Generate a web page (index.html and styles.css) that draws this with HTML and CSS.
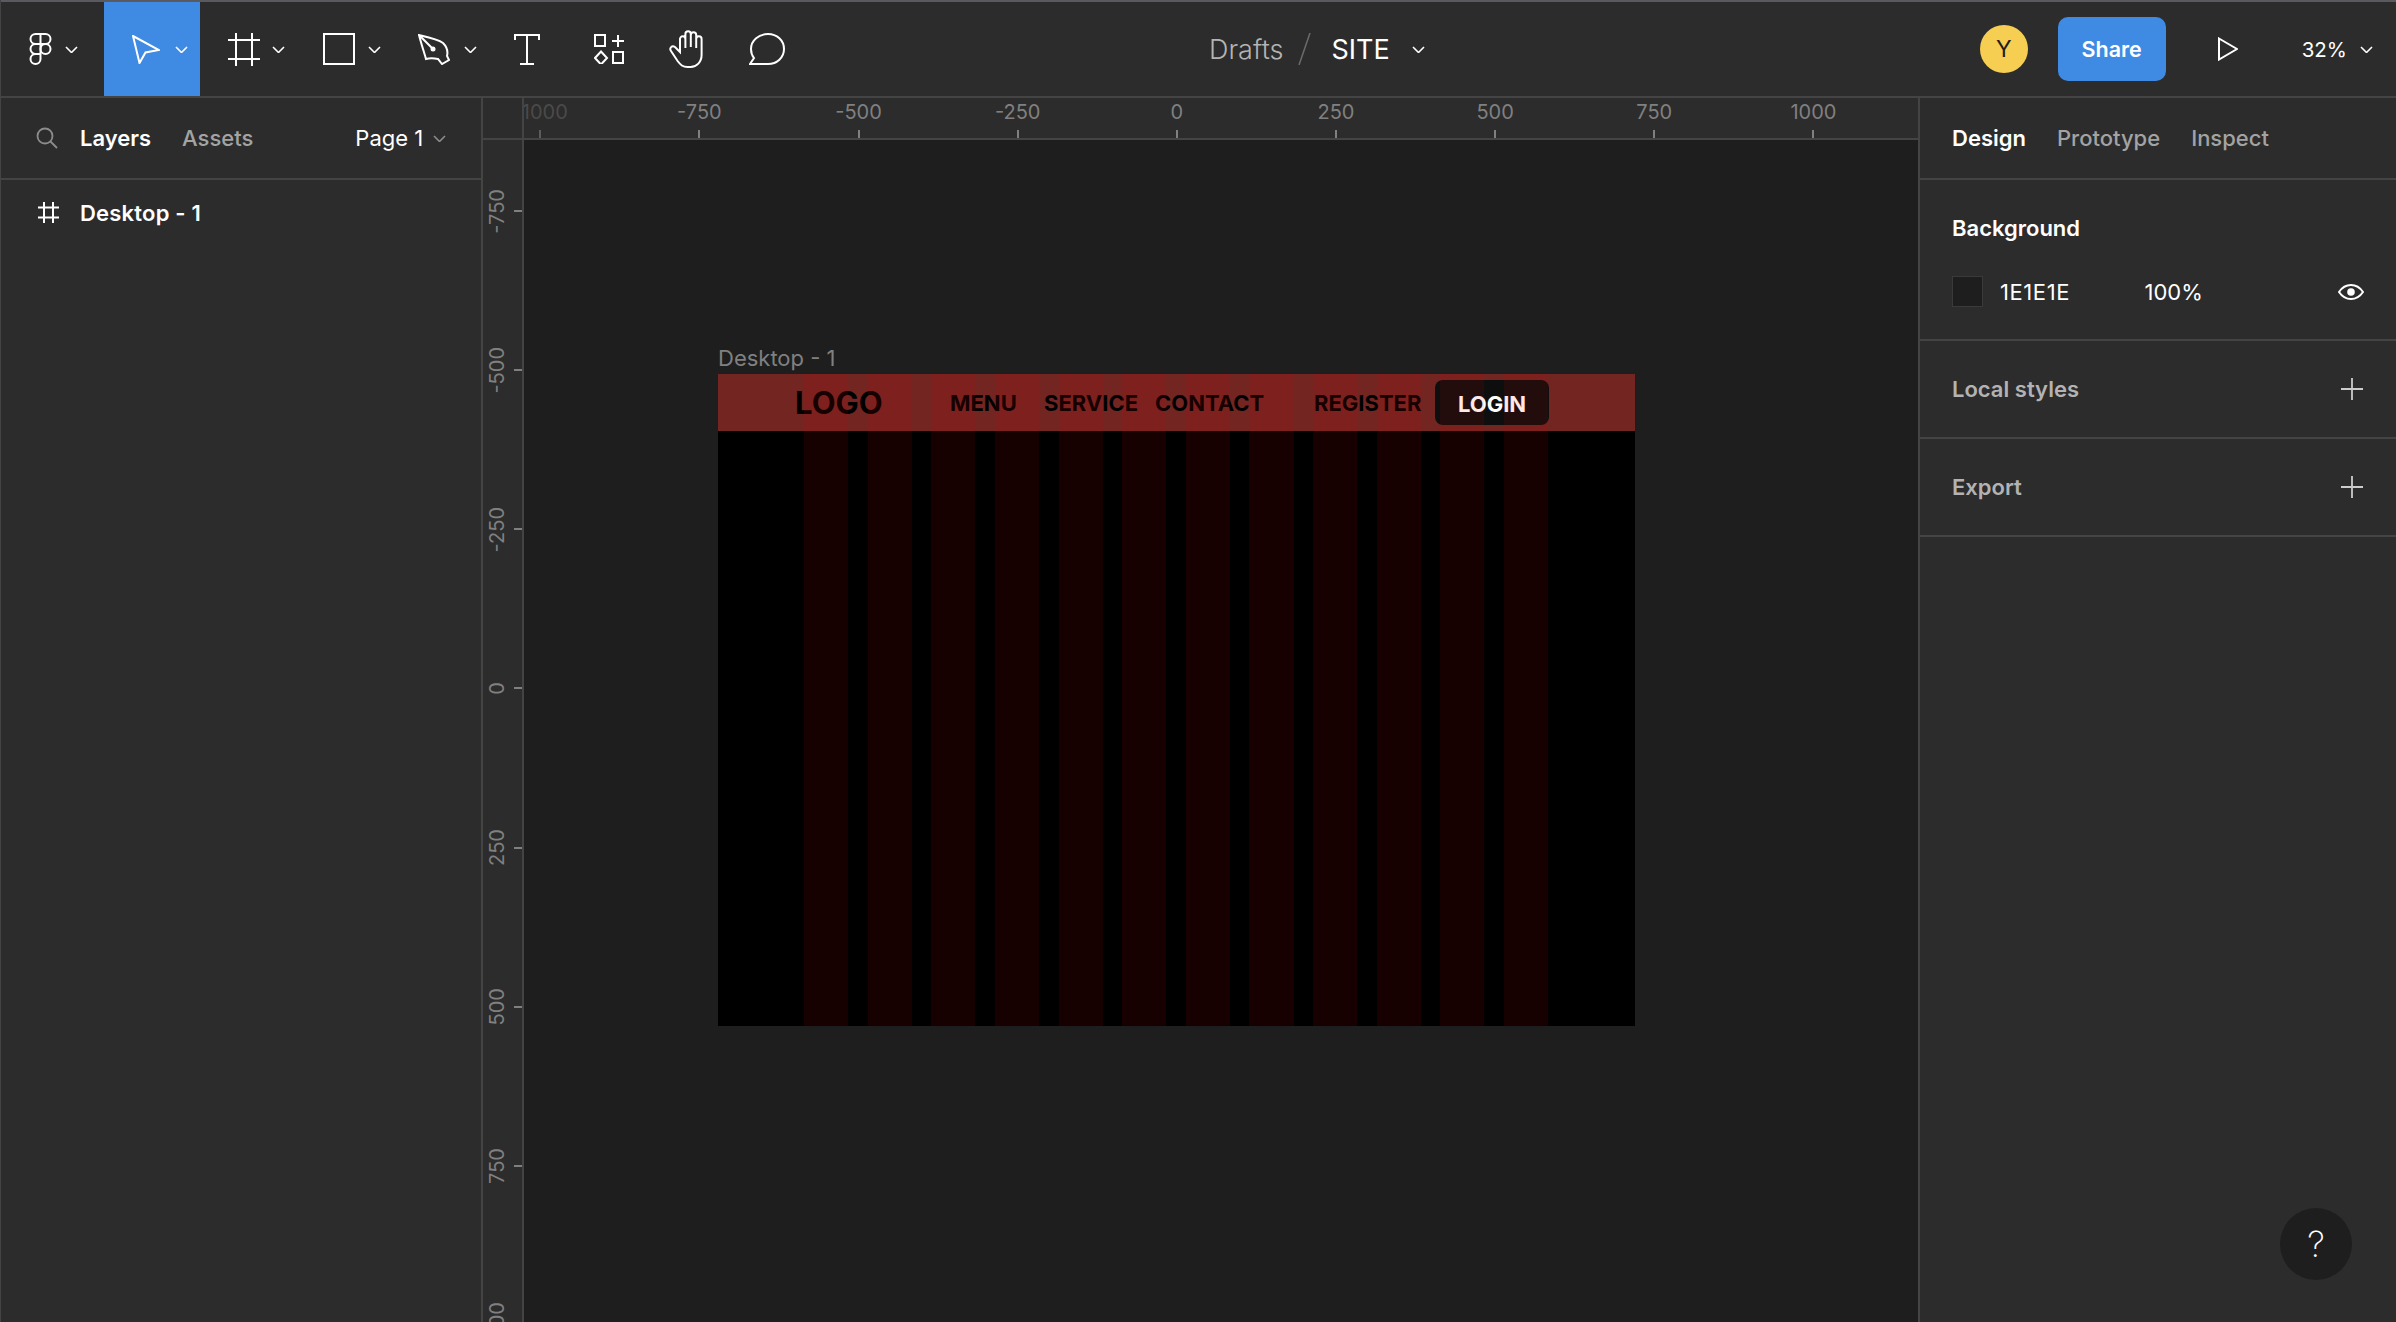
FILE: index.html
```html
<!DOCTYPE html>
<html lang="en">
<head>
    <meta charset="UTF-8">
    <meta name="viewport" content="width=device-width, initial-scale=1.0">
    <title>SITE - Figma</title>
    <link rel="stylesheet" href="styles.css">
</head>
<body>
<div class="app">

    <header class="toolbar">
        <div class="tools">
            <div class="tool tool-logo">
                <svg class="icon" width="23" height="32" viewBox="0 0 23 32"><path d="M11.5 11H6.5a5 5 0 0 1 0-10h10a5 5 0 0 1 0 10zM11.5 1v20H6.5a5 5 0 0 1 0-10M6.5 21h5v5a5 5 0 1 1-5-5z"/><circle cx="16.5" cy="16" r="5"/></svg>
                <svg class="chev" width="13" height="7" viewBox="0 0 13 7"><path d="M1 1l5.500 5.500L12 1"/></svg>
            </div>
            <div class="tool tool-active tool-cursor">
                <svg class="icon" width="28" height="29" viewBox="0 0 28 29"><path d="M1 1l26 14-13.500 2.500L7.500 28z"/></svg>
                <svg class="chev" width="13" height="7" viewBox="0 0 13 7"><path d="M1 1l5.500 5.500L12 1"/></svg>
            </div>
            <div class="tool tool-frame">
                <svg class="icon" width="32" height="33" viewBox="0 0 32 33"><path d="M8 0v33M24 0v33M0 7h32M0 26h32"/></svg>
                <svg class="chev" width="13" height="7" viewBox="0 0 13 7"><path d="M1 1l5.500 5.500L12 1"/></svg>
            </div>
            <div class="tool tool-rect">
                <svg class="icon" width="32" height="32" viewBox="0 0 32 32"><rect x="1" y="1" width="30" height="30"/></svg>
                <svg class="chev" width="13" height="7" viewBox="0 0 13 7"><path d="M1 1l5.500 5.500L12 1"/></svg>
            </div>
            <div class="tool tool-pen">
                <svg class="icon" width="32" height="31" viewBox="0 0 32 31"><path d="M1 1C10 3 20 5 25 9c4 4 5 9 4 13l2 4-7 4-4-5c-4-1-9-1-12 0C6 18 3 9 1 1zM1 1l13 13"/><circle class="dot" cx="15" cy="15" r="2.500"/></svg>
                <svg class="chev" width="13" height="7" viewBox="0 0 13 7"><path d="M1 1l5.500 5.500L12 1"/></svg>
            </div>
            <div class="tool tool-text">
                <svg class="icon" width="26" height="31" viewBox="0 0 26 31"><path d="M1 6V1h24v5M13 1v29M6 30h14"/></svg>
            </div>
            <div class="tool tool-comps">
                <svg class="icon" width="30" height="30" viewBox="0 0 30 30"><rect x="1" y="1" width="10" height="11"/><path d="M24 1v12M18 7h12M7 17.500l6 6.500-6 6.500L1 24z"/><rect x="19" y="18" width="10" height="11"/></svg>
            </div>
            <div class="tool tool-hand">
                <svg class="icon" width="35" height="38" viewBox="0 0 35 38"><path d="M11 20V9a2.700 2.700 0 0 1 5.400 0v9M16.400 17V4a2.700 2.700 0 0 1 5.400 0v13M21.800 17V5a2.700 2.700 0 0 1 5.400 0v12M27.200 18V9a2.700 2.700 0 0 1 5.400 0v16c0 7-5 12-11 12h-3c-5 0-7-2-10-6L2 21c-2-3 1-6 4-4l5 5v-2"/></svg>
            </div>
            <div class="tool tool-comment">
                <svg class="icon" width="36" height="32" viewBox="0 0 36 32"><path d="M19 1c9 0 16 6.500 16 15s-7 15-16 15H1l4-6c-2-2.500-3-5.800-3-9C2 7.500 10 1 19 1z"/></svg>
            </div>
        </div>

        <div class="title">
            <span class="title-folder">Drafts</span>
            <svg class="title-slash" width="13" height="32" viewBox="0 0 13 32"><path d="M12 0L1 32"/></svg>
            <span class="title-name">SITE</span>
            <svg class="chev" width="13" height="7" viewBox="0 0 13 7"><path d="M1 1l5.500 5.500L12 1"/></svg>
        </div>

        <div class="actions">
            <div class="avatar">Y</div>
            <div class="share">Share</div>
            <svg class="icon play" width="20" height="24" viewBox="0 0 20 24"><path d="M1 1.500L19 12 1 22.500z"/></svg>
            <div class="zoom-level">32%</div>
            <svg class="chev" width="13" height="7" viewBox="0 0 13 7"><path d="M1 1l5.500 5.500L12 1"/></svg>
        </div>
    </header>

    <div class="main">

        <aside class="left-panel">
            <div class="left-tabs">
                <svg class="search" width="22" height="22" viewBox="0 0 22 22"><circle cx="9" cy="9" r="7.500"/><path d="M14.500 14.500L21 21"/></svg>
                <span class="tab tab-on">Layers</span>
                <span class="tab tab-assets">Assets</span>
                <span class="page-name">Page 1</span>
                <svg class="chev chev-dim" width="13" height="7" viewBox="0 0 13 7"><path d="M1 1l5.500 5.500L12 1"/></svg>
            </div>
            <div class="layer-row">
                <svg class="icon" width="21" height="21" viewBox="0 0 21 21"><path d="M6 0v21M15 0v21M0 5.500h21M0 15.500h21"/></svg>
                <span class="layer-name">Desktop - 1</span>
            </div>
        </aside>

        <div class="work">
            <div class="ruler-corner"></div>

            <div class="ruler-h">
                <div class="mark mark-dim"><span>-1000</span><i></i></div>
                <div class="mark"><span>-750</span><i></i></div>
                <div class="mark"><span>-500</span><i></i></div>
                <div class="mark"><span>-250</span><i></i></div>
                <div class="mark"><span>0</span><i></i></div>
                <div class="mark"><span>250</span><i></i></div>
                <div class="mark"><span>500</span><i></i></div>
                <div class="mark"><span>750</span><i></i></div>
                <div class="mark"><span>1000</span><i></i></div>
            </div>

            <div class="ruler-v">
                <div class="vmark"><span>-750</span><i></i></div>
                <div class="vmark"><span>-500</span><i></i></div>
                <div class="vmark"><span>-250</span><i></i></div>
                <div class="vmark"><span>0</span><i></i></div>
                <div class="vmark"><span>250</span><i></i></div>
                <div class="vmark"><span>500</span><i></i></div>
                <div class="vmark"><span>750</span><i></i></div>
                <div class="vmark"><span>1000</span><i></i></div>
            </div>

            <div class="canvas">
                <div class="frame-label">Desktop - 1</div>
                <div class="frame">
                    <div class="site-nav">
                        <span class="site-logo">LOGO</span>
                        <span class="site-link link-menu">MENU</span>
                        <span class="site-link link-service">SERVICE</span>
                        <span class="site-link link-contact">CONTACT</span>
                        <span class="site-link link-register">REGISTER</span>
                        <span class="site-login">LOGIN</span>
                    </div>
                    <div class="columns">
                        <div></div><div></div><div></div><div></div><div></div><div></div>
                        <div></div><div></div><div></div><div></div><div></div><div></div>
                    </div>
                </div>
            </div>
        </div>

        <aside class="right-panel">
            <div class="right-tabs">
                <span class="tab tab-on">Design</span>
                <span class="tab">Prototype</span>
                <span class="tab">Inspect</span>
            </div>
            <section class="section section-bg">
                <div class="section-title">Background</div>
                <div class="fill-row">
                    <div class="swatch"></div>
                    <span class="fill-hex">1E1E1E</span>
                    <span class="fill-pct">100%</span>
                    <svg class="icon eye" width="26" height="16" viewBox="0 0 26 16"><path d="M1 8c3-4.500 7-7 12-7s9 2.500 12 7c-3 4.500-7 7-12 7S4 12.500 1 8z"/><circle class="dot" cx="13" cy="8" r="3.800"/></svg>
                </div>
            </section>
            <section class="section section-row">
                <span class="section-muted">Local styles</span>
                <svg class="icon" width="22" height="22" viewBox="0 0 22 22"><path d="M11 0v22M0 11h22"/></svg>
            </section>
            <section class="section section-row">
                <span class="section-muted">Export</span>
                <svg class="icon" width="22" height="22" viewBox="0 0 22 22"><path d="M11 0v22M0 11h22"/></svg>
            </section>
            <div class="help">?</div>
        </aside>

    </div>
</div>
</body>
</html>
```

FILE: styles.css
```css
* {
    box-sizing: border-box;
}

body {
    margin: 0;
    background-color: #2c2c2c;
    color: #fff;
    font-family: Inter, "Liberation Sans", sans-serif;
    overflow: hidden;
}

.app {
    width: 2396px;
    height: 1322px;
    display: flex;
    flex-direction: column;
    border-left: 1px solid #444;
}

svg {
    display: block;
    flex: none;
    fill: none;
}

.icon {
    stroke: #fff;
    stroke-width: 2;
}

.icon .dot {
    fill: #fff;
    stroke: none;
}

.chev {
    stroke: #fff;
    stroke-width: 1.6;
}

.chev-dim {
    stroke: #8c8c8c;
}

/* toolbar */
.toolbar {
    height: 98px;
    flex: none;
    display: grid;
    grid-template-columns: 1208px auto 1fr;
    align-items: center;
    background-color: #2c2c2c;
    border-top: 2px solid #5b5a60;
    border-bottom: 2px solid #444;
}

.tools {
    display: flex;
    height: 94px;
}

.tool {
    display: flex;
    align-items: center;
    padding-left: 28px;
    flex: none;
}

.tool-active {
    background-color: #3f8ae3;
}

.tool-logo { width: 103px; gap: 13px; }
.tool-cursor { width: 96px; gap: 15px; }
.tool-frame { width: 95px; gap: 12px; }
.tool-rect { width: 95px; gap: 13px; }
.tool-pen { width: 96px; gap: 14px; }
.tool-text { width: 80px; }
.tool-comps { width: 75px; }
.tool-hand { width: 80px; }
.tool-comment { width: 80px; }

.title {
    display: flex;
    align-items: center;
    font-size: 27px;
    font-weight: 300;
}

.title-folder {
    color: #b4b4b4;
}

.title-slash {
    stroke: #6b6b6b;
    stroke-width: 1.5;
    margin: 0 20px 0 15px;
}

.title-name {
    margin-right: 22px;
    font-weight: 400;
}

.actions {
    display: flex;
    align-items: center;
    justify-content: flex-end;
    padding-right: 23px;
}

.avatar {
    width: 48px;
    height: 48px;
    border-radius: 50%;
    background-color: #f6cf52;
    color: #1e1e1e;
    font-size: 23px;
    display: flex;
    align-items: center;
    justify-content: center;
    margin-right: 30px;
}

.share {
    width: 108px;
    height: 64px;
    border-radius: 10px;
    background-color: #3f8ae3;
    font-size: 21.500px;
    font-weight: 600;
    display: flex;
    align-items: center;
    justify-content: center;
    margin-right: 52px;
}

.play {
    margin-right: 64px;
}

.zoom-level {
    font-size: 20.500px;
    margin-right: 13px;
}

/* panels */
.main {
    flex: 1;
    display: flex;
    min-height: 0;
}

.left-panel {
    width: 482px;
    flex: none;
    border-right: 2px solid #444;
}

.left-tabs {
    height: 82px;
    display: flex;
    align-items: center;
    padding-left: 35px;
    border-bottom: 2px solid #444;
    font-size: 22px;
}

.search {
    stroke: #8c8c8c;
    stroke-width: 1.8;
    margin-right: 22px;
}

.tab {
    color: #a3a3a3;
    font-weight: 500;
    font-size: 22px;
}

.tab-on {
    color: #fff;
    font-weight: 600;
}

.tab-assets {
    margin-left: 31px;
}

.page-name {
    margin-left: 102px;
    margin-right: 10px;
}

.layer-row {
    height: 65px;
    display: flex;
    align-items: center;
    padding-left: 37px;
    gap: 21px;
}

.layer-name {
    font-size: 22px;
    font-weight: 600;
    letter-spacing: 0.2px;
}

.work {
    flex: 1;
    min-width: 0;
    display: grid;
    grid-template-columns: 41px 1fr;
    grid-template-rows: 42px 1fr;
}

.ruler-corner {
    border-right: 2px solid #444;
    border-bottom: 2px solid #444;
}

.ruler-h {
    display: flex;
    overflow: hidden;
    border-bottom: 2px solid #444;
    padding-left: 0;
}

.mark {
    flex: 0 0 159.15px;
    display: flex;
    flex-direction: column;
    align-items: center;
    justify-content: flex-end;
    color: #808080;
    font-size: 20px;
}

.mark:first-child {
    margin-left: -63.3px;
}

.mark i {
    display: block;
    width: 2px;
    height: 8px;
    margin-top: 6px;
    background-color: #808080;
}

.mark-dim {
    color: #4a4a4a;
}

.mark-dim i {
    background-color: #5c5c5c;
}

.ruler-v {
    display: flex;
    flex-direction: column;
    overflow: hidden;
    border-right: 2px solid #444;
    min-height: 0;
}

.vmark {
    flex: 0 0 159.15px;
    display: flex;
    align-items: center;
    justify-content: flex-end;
    color: #808080;
    font-size: 20px;
}

.vmark:first-child {
    margin-top: -8.500px;
}

.vmark span {
    writing-mode: vertical-rl;
    transform: rotate(180deg);
}

.vmark i {
    display: block;
    width: 8px;
    height: 2px;
    margin-left: 5px;
    background-color: #808080;
}

/* canvas: the frame sits on a free canvas, so it is placed by coordinates */
.canvas {
    position: relative;
    overflow: hidden;
    background-color: #1e1e1e;
}

.frame-label {
    position: absolute;
    left: 194px;
    top: 204px;
    color: #808080;
    font-size: 22px;
    line-height: 28px;
}

.frame {
    position: absolute;
    left: 194px;
    top: 234px;
    width: 917px;
    height: 652px;
    background-color: #000;
}

.site-nav {
    height: 57px;
    display: flex;
    align-items: center;
    background-color: #722521;
    color: #000;
    font-weight: 700;
}

.site-logo {
    font-size: 31px;
    margin-left: 77px;
    width: 155px;
}

.site-link {
    font-size: 22px;
}

.link-menu { width: 94px; }
.link-service { width: 111px; }
.link-contact { width: 159px; }
.link-register { width: 121px; }

.site-login {
    width: 114px;
    height: 45px;
    border-radius: 8px;
    background-color: #0e0e0e;
    color: #fff;
    font-size: 22px;
    padding-top: 2px;
    display: flex;
    align-items: center;
    justify-content: center;
}

/* 12 column layout grid, painted over the frame contents */
.columns {
    position: absolute;
    inset: 0;
    padding: 0 87px 0 86px;
    display: grid;
    grid-template-columns: repeat(12, 1fr);
    column-gap: 19.500px;
    pointer-events: none;
}

.columns div {
    background-color: rgba(255, 0, 0, 0.09);
}

.right-panel {
    width: 478px;
    flex: none;
    border-left: 2px solid #444;
    position: relative;
}

.right-tabs {
    height: 82px;
    display: flex;
    align-items: center;
    padding-left: 32px;
    gap: 31px;
    border-bottom: 2px solid #444;
}

.section {
    border-bottom: 2px solid #444;
    padding: 0 32px;
}

.section-bg {
    height: 161px;
    padding-top: 34px;
}

.section-title {
    font-size: 22px;
    font-weight: 600;
    line-height: 28px;
}

.fill-row {
    display: flex;
    align-items: center;
    margin-top: 34px;
    font-size: 22px;
}

.swatch {
    width: 31px;
    height: 31px;
    background-color: #1e1e1e;
    border: 1px solid #3a3a3a;
    margin-right: 17px;
}

.fill-hex {
    width: 145px;
    letter-spacing: 0.6px;
}

.fill-pct {
    width: 194px;
}

.section-row {
    height: 98px;
    display: flex;
    align-items: center;
    justify-content: space-between;
}

.section-row .icon {
    margin-right: 1px;
    stroke: #ccc;
    stroke-width: 1.8;
}

.section-muted {
    color: #b3b3b3;
    font-size: 22px;
    font-weight: 600;
}

.help {
    position: absolute;
    left: 360px;
    top: 1110px;
    width: 72px;
    height: 72px;
    border-radius: 50%;
    background-color: #1e1e1e;
    display: flex;
    align-items: center;
    justify-content: center;
    font-size: 36px;
    font-weight: 200;
}
```
